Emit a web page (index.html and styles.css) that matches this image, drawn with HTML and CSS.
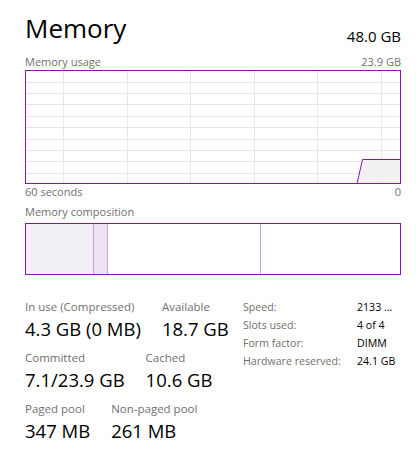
FILE: index.html
```html
<!DOCTYPE html>
<html>
<head>
<meta charset="utf-8">
<link rel="stylesheet" href="styles.css">
</head>
<body>
<div class="panel">
  <div class="header">
    <div class="title">Memory</div>
    <div class="total">48.0 GB</div>
  </div>
  <div class="caption-row">
    <span>Memory usage</span>
    <span>23.9 GB</span>
  </div>
  <svg class="graph" width="376" height="114" viewBox="0 0 376 114">
    <g stroke="#efdff1" stroke-width="1">
      <line x1="38.5" y1="0" x2="38.5" y2="114"/>
      <line x1="102.5" y1="0" x2="102.5" y2="114"/>
      <line x1="165.5" y1="0" x2="165.5" y2="114"/>
      <line x1="229.5" y1="0" x2="229.5" y2="114"/>
      <line x1="292.5" y1="0" x2="292.5" y2="114"/>
      <line x1="356.5" y1="0" x2="356.5" y2="114"/>
      <line x1="0" y1="12.5" x2="376" y2="12.5"/>
      <line x1="0" y1="23.5" x2="376" y2="23.5"/>
      <line x1="0" y1="34.5" x2="376" y2="34.5"/>
      <line x1="0" y1="46.5" x2="376" y2="46.5"/>
      <line x1="0" y1="57.5" x2="376" y2="57.5"/>
      <line x1="0" y1="69.5" x2="376" y2="69.5"/>
      <line x1="0" y1="80.5" x2="376" y2="80.5"/>
      <line x1="0" y1="91.5" x2="376" y2="91.5"/>
      <line x1="0" y1="103.5" x2="376" y2="103.5"/>
    </g>
    <polygon points="332,113.5 337.5,89.5 376,89.5 376,114 332,114" fill="#f1eef3" fill-opacity="0.8"/>
    <polyline points="332,113.5 337.5,89.5 375.5,89.5" fill="none" stroke="#8b12ae" stroke-width="1"/>
    <rect x="0.5" y="0.5" width="375" height="113" fill="none" stroke="#8b12ae" stroke-width="1"/>
  </svg>
  <div class="caption-row">
    <span>60 seconds</span>
    <span>0</span>
  </div>
  <div class="caption-row comp-label">
    <span>Memory composition</span>
  </div>
  <div class="composition">
    <div class="seg seg-inuse"></div>
    <div class="seg seg-modified"></div>
    <div class="seg seg-standby"></div>
    <div class="seg seg-free"></div>
  </div>
  <div class="stats">
    <div class="stats-left">
      <div class="stat-row">
        <div class="stat">
          <div class="label">In use (Compressed)</div>
          <div class="value">4.3 GB (0 MB)</div>
        </div>
        <div class="stat">
          <div class="label">Available</div>
          <div class="value">18.7 GB</div>
        </div>
      </div>
      <div class="stat-row">
        <div class="stat">
          <div class="label">Committed</div>
          <div class="value">7.1/23.9 GB</div>
        </div>
        <div class="stat">
          <div class="label">Cached</div>
          <div class="value">10.6 GB</div>
        </div>
      </div>
      <div class="stat-row">
        <div class="stat">
          <div class="label">Paged pool</div>
          <div class="value">347 MB</div>
        </div>
        <div class="stat">
          <div class="label">Non-paged pool</div>
          <div class="value">261 MB</div>
        </div>
      </div>
    </div>
    <div class="stats-right">
      <div class="kv"><span class="k">Speed:</span><span class="v">2133 ...</span></div>
      <div class="kv"><span class="k">Slots used:</span><span class="v">4 of 4</span></div>
      <div class="kv"><span class="k">Form factor:</span><span class="v">DIMM</span></div>
      <div class="kv"><span class="k">Hardware reserved:</span><span class="v">24.1 GB</span></div>
    </div>
  </div>
</div>
</body>
</html>
```
FILE: styles.css
```css
html, body {
  margin: 0;
  padding: 0;
  background: #ffffff;
}
body {
  font-family: "Open Sans", "Noto Sans", sans-serif;
  color: #000;
}
.panel {
  width: 376px;
  padding: 0 0 0 25px;
}
.header {
  display: flex;
  justify-content: space-between;
  align-items: flex-start;
  height: 54px;
}
.title {
  font-size: 26px;
  line-height: 34px;
  margin-top: 11px;
}
.total {
  font-size: 15px;
  line-height: 20px;
  margin-top: 26px;
}
.caption-row {
  display: flex;
  justify-content: space-between;
  font-size: 11px;
  line-height: 16px;
  height: 16px;
  color: #707070;
}
.graph {
  display: block;
}
.comp-label {
  margin-top: 4px;
}
.composition {
  display: flex;
  height: 50px;
  margin-top: 3px;
  border: 1px solid #8b12ae;
}
.seg {
  height: 100%;
  border-right: 1px solid #c9a0d9;
}
.seg-inuse {
  width: 67px;
  background: #f3f0f5;
}
.seg-modified {
  width: 13px;
  background: #eee3f3;
}
.seg-standby {
  width: 152px;
}
.seg-free {
  flex: 1;
  border-right: none;
}
.stats {
  display: flex;
  margin-top: 24px;
}
.stats-left {
  width: 218px;
}
.stat-row {
  display: flex;
  gap: 21px;
  margin-bottom: 9px;
}
.label {
  font-size: 11.5px;
  line-height: 16px;
  color: #707070;
}
.value {
  font-size: 18.5px;
  line-height: 24px;
  margin-top: 2px;
}
.stats-right {
  margin-top: -1px;
}
.kv {
  display: flex;
  font-size: 10.6px;
  line-height: 18px;
}
.k {
  width: 114px;
  color: #707070;
}
.v {
  color: #000;
}
```
